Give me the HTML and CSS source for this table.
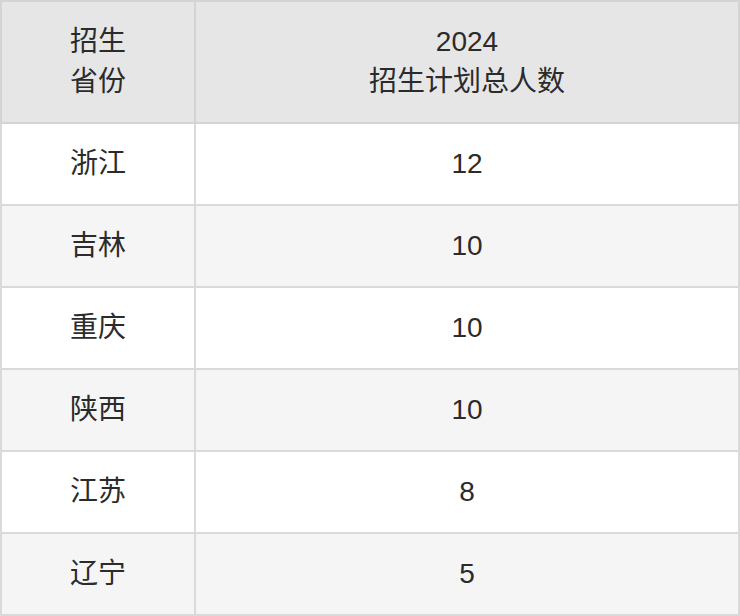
FILE: index.html
```html
<!DOCTYPE html>
<html lang="zh">
<head>
<meta charset="utf-8">
<link rel="stylesheet" href="styles.css">
</head>
<body>
<table class="plan">
  <colgroup><col class="c1"><col class="c2"></colgroup>
  <thead>
    <tr><th>招生<br>省份</th><th><span class="num">2024</span><br>招生计划总人数</th></tr>
  </thead>
  <tbody>
    <tr><td>浙江</td><td class="num">12</td></tr>
    <tr><td>吉林</td><td class="num">10</td></tr>
    <tr><td>重庆</td><td class="num">10</td></tr>
    <tr><td>陕西</td><td class="num">10</td></tr>
    <tr><td>江苏</td><td class="num">8</td></tr>
    <tr><td>辽宁</td><td class="num">5</td></tr>
  </tbody>
</table>
</body>
</html>
```
FILE: styles.css
```css
html, body {
  margin: 0;
  padding: 0;
  background: #ffffff;
}
.plan {
  width: 740px;
  border-collapse: collapse;
  font-family: "Liberation Sans", Arial, "Noto Sans CJK SC", sans-serif;
  font-size: 28px;
  line-height: 40px;
  color: #2b2b2b;
  table-layout: fixed;
}
.plan .c1 { width: 194px; }
.plan th, .plan td {
  border: 2px solid #dadada;
  text-align: center;
  font-weight: normal;
  padding: 0;
}
.plan th {
  height: 120px;
  background: #e6e6e6;
  border-color: #d4d4d4;
}
.plan td {
  height: 80px;
}
.plan .num {
  font-size: 28px;
}
.plan tbody tr:nth-child(even) td {
  background: #f5f5f5;
}
```
